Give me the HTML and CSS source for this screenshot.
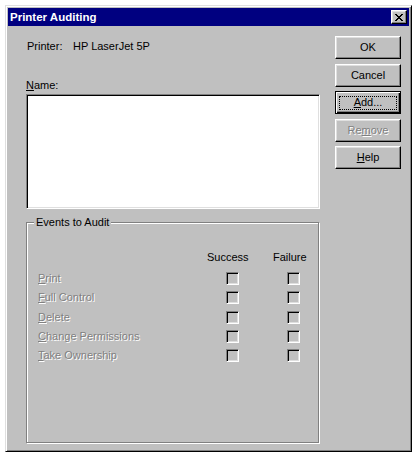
FILE: index.html
```html
<!DOCTYPE html>
<html>
<head>
<meta charset="utf-8">
<title>Printer Auditing</title>
<link rel="stylesheet" href="styles.css">
</head>
<body>
<div class="window">
  <div class="titlebar">
    <span class="title">Printer Auditing</span>
    <div class="close">
      <svg width="8" height="7" viewBox="0 0 8 7" shape-rendering="crispEdges">
        <path fill="#000" d="M0 0h2v1h-2zM6 0h2v1h-2zM1 1h2v1h-2zM5 1h2v1h-2zM2 2h4v1h-4zM3 3h2v1h-2zM2 4h4v1h-4zM1 5h2v1h-2zM5 5h2v1h-2zM0 6h2v1h-2zM6 6h2v1h-2z"/>
      </svg>
    </div>
  </div>
  <div class="body">
    <div class="left">
      <div class="printer-row"><span class="plabel">Printer:</span><span>HP LaserJet 5P</span></div>
      <div class="name-label"><u>N</u>ame:</div>
      <div class="listbox"></div>
      <fieldset class="group">
        <legend>Events to Audit</legend>
        <div class="inner">
          <div class="grid hdr"><span></span><span>Success</span><span>Failure</span></div>
          <div class="grid row"><span class="dis"><u>P</u>rint</span><span class="cb c2"></span><span class="cb c3"></span></div>
          <div class="grid row"><span class="dis"><u>F</u>ull Control</span><span class="cb c2"></span><span class="cb c3"></span></div>
          <div class="grid row"><span class="dis"><u>D</u>elete</span><span class="cb c2"></span><span class="cb c3"></span></div>
          <div class="grid row"><span class="dis"><u>C</u>hange Permissions</span><span class="cb c2"></span><span class="cb c3"></span></div>
          <div class="grid row"><span class="dis"><u>T</u>ake Ownership</span><span class="cb c2"></span><span class="cb c3"></span></div>
        </div>
      </fieldset>
    </div>
    <div class="buttons">
      <div class="btn">OK</div>
      <div class="btn">Cancel</div>
      <div class="btn default"><span class="focus"></span><span><u>A</u>dd...</span></div>
      <div class="btn dis">Re<u>m</u>ove</div>
      <div class="btn"><span><u>H</u>elp</span></div>
    </div>
  </div>
</div>
</body>
</html>
```
FILE: styles.css
```css
* { box-sizing: border-box; }
body {
  margin: 0;
  background: #fff;
  font: 11px/13px "Liberation Sans", Arial, sans-serif;
  color: #000;
}
u { text-decoration: underline; text-underline-offset: 1px; }
.window {
  margin: 5px;
  width: 407px;
  height: 447px;
  background: #c0c0c0;
  border: 1px solid;
  border-color: #dfdfdf #000 #000 #dfdfdf;
  box-shadow: inset 1px 1px #fff, inset -1px -1px #808080;
  padding: 2px;
  display: flex;
  flex-direction: column;
}
.titlebar {
  height: 18px;
  background: #000080;
  color: #fff;
  display: flex;
  align-items: center;
  padding: 0 2px;
  flex: none;
}
.title { font-weight: bold; font-size: 11.5px; }
.close {
  margin-left: auto;
  width: 16px;
  height: 14px;
  background: #c0c0c0;
  border: 1px solid;
  border-color: #fff #000 #000 #fff;
  box-shadow: inset -1px -1px #808080, inset 1px 1px #dfdfdf;
  display: flex;
  align-items: center;
  justify-content: center;
}
.close svg { display: block; margin-left: -1px; }
.body {
  flex: 1;
  display: flex;
  padding: 10px 8px 0 18px;
  gap: 16px;
}
.left {
  width: 293px;
  display: flex;
  flex-direction: column;
  padding: 4px 0 6px;
}
.printer-row { display: flex; padding-left: 1px; }
.plabel { width: 46px; }
.name-label { margin-top: 26px; }
.listbox {
  margin-top: 2px;
  height: 115px;
  width: 294px;
  background: #fff;
  border: 1px solid;
  border-color: #808080 #fff #fff #808080;
  box-shadow: inset 1px 1px #000, inset -1px -1px #dfdfdf;
  flex: none;
}
.group {
  margin: 7px 0 0;
  padding: 0;
  min-width: 0;
  border: 1px solid #808080;
  box-shadow: inset 1px 1px #fff, 1px 1px #fff;
  flex: 1;
}
.group legend {
  margin-left: 7px;
  padding: 0 2px;
  background: #c0c0c0;
}
.inner { padding: 22px 0 0 11px; }
.grid {
  display: grid;
  grid-template-columns: 169px 66px auto;
  align-items: center;
}
.hdr { margin-bottom: 5px; }
.row { height: 19.25px; }
.dis { color: #808080; text-shadow: 1px 1px 0 #fff; }
.cb {
  width: 13px;
  height: 13px;
  background: #c0c0c0;
  border: 1px solid;
  border-color: #808080 #fff #fff #808080;
  box-shadow: inset 1px 1px #000, inset -1px -1px #dfdfdf;
}
.c2 { margin-left: 19px; }
.c3 { margin-left: 14px; }
.buttons {
  display: flex;
  flex-direction: column;
  gap: 4.5px;
  width: 66px;
}
.btn {
  position: relative;
  width: 66px;
  height: 23px;
  background: #c0c0c0;
  border: 1px solid;
  border-color: #fff #000 #000 #fff;
  box-shadow: inset -1px -1px #808080, inset 1px 1px #dfdfdf;
  display: flex;
  align-items: center;
  justify-content: center;
}
.btn.default {
  border-color: #000;
  box-shadow: inset 1px 1px #fff, inset -1px -1px #000, inset -2px -2px #808080;
}
.focus {
  position: absolute;
  left: 3px;
  right: 3px;
  top: 4px;
  bottom: 3px;
  border: 1px dotted #000;
}
```
